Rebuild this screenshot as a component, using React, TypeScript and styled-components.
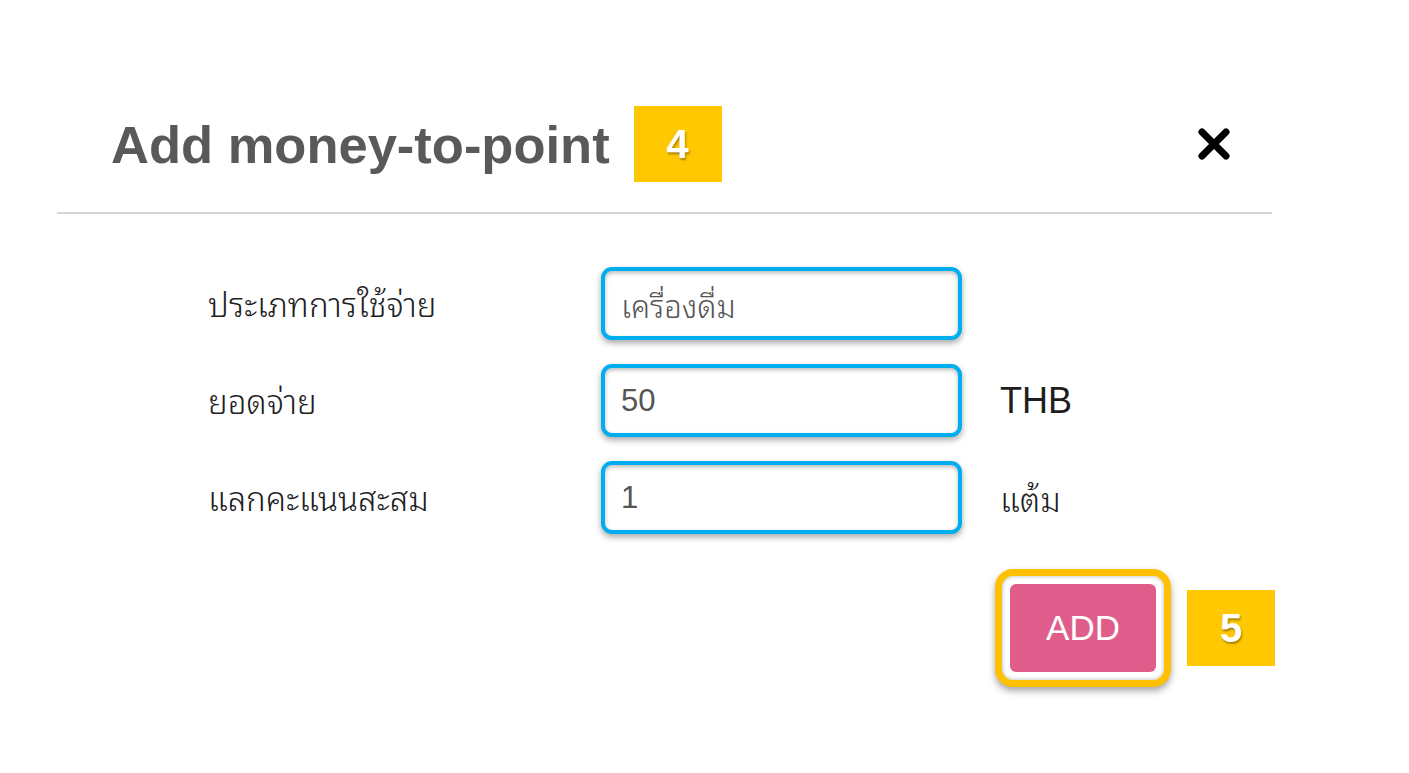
import React from 'react'
import styled, { createGlobalStyle } from 'styled-components'

const GlobalStyle = createGlobalStyle`
  html, body {
    margin: 0;
    padding: 0;
    background: #ffffff;
  }
  body {
    font-family: 'Liberation Sans', 'Noto Sans Thai Looped', 'Noto Sans Thai', 'Noto Sans', Arial, sans-serif;
  }
`

const thai = `'Liberation Sans', 'Noto Sans Thai Looped', 'Noto Sans Thai', 'Noto Sans', Tahoma, sans-serif`

const Page = styled.div`
  width: 1409px;
  height: 773px;
  padding: 65px 0 0 57px;
  box-sizing: border-box;
`

const Modal = styled.div`
  width: 1215px;
  position: relative;
`

const Header = styled.div`
  display: flex;
  align-items: center;
  height: 149px;
  padding: 11px 40px 0 54px;
  box-sizing: border-box;
  border-bottom: 2px solid #d6d6d6;
`

const Title = styled.h2`
  margin: 0;
  font-family: 'Liberation Sans', Arial, sans-serif;
  font-weight: bold;
  font-size: 52.5px;
  color: #595959;
`

const Badge = styled.div`
  width: 88px;
  height: 76px;
  background: #ffc800;
  color: #ffffff;
  display: flex;
  align-items: center;
  justify-content: center;
  font-family: 'Liberation Sans', Arial, sans-serif;
  font-weight: bold;
  font-size: 40px;
  text-shadow: 1px 2px 2px rgba(0, 0, 0, 0.35);
  flex-shrink: 0;
`

const TitleBadge = styled(Badge)`
  margin-left: 24px;
`

const Close = styled.button`
  margin-left: auto;
  width: 36px;
  height: 36px;
  padding: 0;
  border: none;
  background: none;
  display: flex;
  align-items: center;
  justify-content: center;
  cursor: pointer;
`

const Body = styled.div`
  padding: 53px 0 0 151px;
`

const Form = styled.div`
  display: grid;
  grid-template-columns: 355px 361px auto;
  column-gap: 38px;
  row-gap: 24px;
  align-items: center;
`

const Label = styled.div`
  font-family: ${thai};
  font-size: 33px;
  font-weight: 300;
  color: #1e1e1e;
  margin-top: -3px;
`

const Highlight = styled.div`
  height: 73px;
  box-sizing: border-box;
  border: 4px solid #00aeef;
  border-radius: 11px;
  background: #ffffff;
  box-shadow: 0 3px 6px rgba(0, 0, 0, 0.35), inset 0 2px 4px rgba(0, 0, 0, 0.28);
  display: flex;
  align-items: center;
  padding: 0 16px;
`

const Field = styled.input`
  width: 100%;
  border: none;
  outline: none;
  background: transparent;
  font-family: ${thai};
  font-size: 31px;
  font-weight: 300;
  color: #555555;
  padding: 0;
`

const Unit = styled.div<{ $latin?: boolean }>`
  font-family: ${thai};
  font-size: ${(p) => (p.$latin ? '36px' : '33px')};
  font-weight: ${(p) => (p.$latin ? 400 : 300)};
  color: #1e1e1e;
`

const Actions = styled.div`
  display: flex;
  align-items: center;
  gap: 16px;
  padding: 35px 0 0 787px;
`

const ButtonHighlight = styled.div`
  width: 176px;
  height: 118px;
  flex-shrink: 0;
  box-sizing: border-box;
  border: 7px solid #ffc000;
  border-radius: 18px;
  padding: 8px;
  background: #ffffff;
  box-shadow: 0 4px 7px rgba(0, 0, 0, 0.35), inset 0 0 4px rgba(0, 0, 0, 0.3);
`

const AddButton = styled.button`
  width: 100%;
  height: 100%;
  border: none;
  border-radius: 6px;
  background: #e05c8a;
  color: #ffffff;
  font-family: 'Liberation Sans', Arial, sans-serif;
  font-size: 35px;
  cursor: pointer;
`

const rows = [
  { label: 'ประเภทการใช้จ่าย', value: 'เครื่องดื่ม', unit: '', latin: false },
  { label: 'ยอดจ่าย', value: '50', unit: 'THB', latin: true },
  { label: 'แลกคะแนนสะสม', value: '1', unit: 'แต้ม', latin: false },
]

export default function App() {
  return (
    <>
      <GlobalStyle />
      <Page>
        <Modal>
          <Header>
            <Title>Add money-to-point</Title>
            <TitleBadge>4</TitleBadge>
            <Close aria-label="close">
              <svg width="34" height="34" viewBox="0 0 34 34">
                <path d="M5 5 L29 29 M29 5 L5 29" stroke="#000" strokeWidth="7" strokeLinecap="round" />
              </svg>
            </Close>
          </Header>
          <Body>
            <Form>
              {rows.map((r) => (
                <React.Fragment key={r.label}>
                  <Label>{r.label}</Label>
                  <Highlight>
                    <Field defaultValue={r.value} readOnly />
                  </Highlight>
                  <Unit $latin={r.latin}>{r.unit}</Unit>
                </React.Fragment>
              ))}
            </Form>
            <Actions>
              <ButtonHighlight>
                <AddButton>ADD</AddButton>
              </ButtonHighlight>
              <Badge>5</Badge>
            </Actions>
          </Body>
        </Modal>
      </Page>
    </>
  )
}
